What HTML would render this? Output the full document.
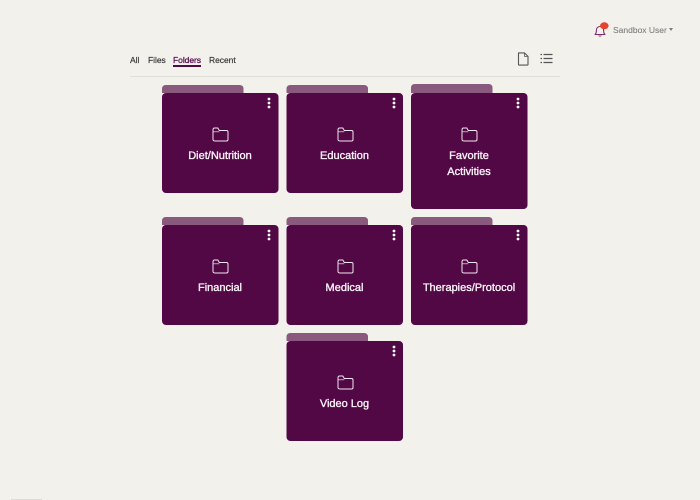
<!DOCTYPE html>
<html>
<head>
<meta charset="utf-8">
<style>
html,body{margin:0;padding:0;width:700px;height:500px;overflow:hidden;background:#f3f1ec;font-family:"Liberation Sans",sans-serif}
.a{position:absolute}
.card{position:absolute;width:116px;color:#fff}
.card .t{position:absolute;left:0;right:0;top:55px;text-align:center;font-size:11px;line-height:16px;color:#f8f2f6;-webkit-text-stroke:.35px #f8f2f6}
.card svg{position:absolute}
.nav{position:absolute;top:54px;font-size:8.5px;line-height:12px;color:#3a3a3a;-webkit-text-stroke:.2px #3a3a3a;letter-spacing:-.05px}
</style>
</head>
<body>
<svg class="a" style="left:0;top:0" width="700" height="500">
<g fill="#8a5a7e">
<path d="M162 93V89q0-4 4-4h73.500q4 0 4 4v4z"/>
<path d="M286.500 93V89q0-4 4-4H364q4 0 4 4v4z"/>
<path d="M411 93V88q0-4 4-4h73.500q4 0 4 4v5z"/>
<path d="M162 225V221q0-4 4-4h73.500q4 0 4 4v4z"/>
<path d="M286.500 225V221q0-4 4-4H364q4 0 4 4v4z"/>
<path d="M411 225V221q0-4 4-4h73.500q4 0 4 4v4z"/>
<path d="M286.500 341V337q0-4 4-4H364q4 0 4 4v4z"/>
</g>
<g fill="#530846">
<rect x="162" y="93" width="116.500" height="100" rx="4"/>
<rect x="286.500" y="93" width="116.500" height="100" rx="4"/>
<rect x="411" y="93" width="116.500" height="116" rx="4"/>
<rect x="162" y="225" width="116.500" height="100" rx="4"/>
<rect x="286.500" y="225" width="116.500" height="100" rx="4"/>
<rect x="411" y="225" width="116.500" height="100" rx="4"/>
<rect x="286.500" y="341" width="116.500" height="100" rx="4"/>
</g>
</svg>

<svg class="a" style="left:592px;top:20px" width="20" height="20" viewBox="0 0 20 20" fill="none"><path d="M3 14.500c1.200-1 1.400-2.200 1.400-4 0-2.400 1.300-4 3.600-4s3.600 1.600 3.600 4c0 1.800.3 3 1.400 4z" stroke="#7d2c6c" stroke-width="1.100" stroke-linejoin="round"/><path d="M6.800 15.500c.3.800 2.100.8 2.400 0" stroke="#7d2c6c"/><ellipse cx="12.300" cy="5.800" rx="4.300" ry="3.500" fill="#e8432f"/></svg>
<div class="a" style="left:613px;top:24px;font-size:8.5px;line-height:12px;color:#7e7e7e;-webkit-text-stroke:.1px #7e7e7e">Sandbox User</div>
<div class="a" style="left:669px;top:28px;width:0;height:0;border-left:2.800px solid transparent;border-right:2.800px solid transparent;border-top:3.200px solid #7e7e7e"></div>

<div class="nav" style="left:130px">All</div>
<div class="nav" style="left:148px">Files</div>
<div class="nav" style="left:173px;color:#5f1153;-webkit-text-stroke:.3px #5f1153">Folders</div>
<div class="nav" style="left:209px">Recent</div>
<div class="a" style="left:173px;top:65px;width:27.500px;height:2px;background:#530846"></div>
<div class="a" style="left:130px;top:76px;width:430px;height:1px;background:#e0dfda"></div>

<svg class="a" style="left:516px;top:52px" width="14" height="14" viewBox="0 0 14 14" fill="none"><path d="M2.500 .9h6L12 4.400V12.500q0 .6-.6.6H3.100q-.6 0-.6-.6z" stroke="#555" stroke-width="1.100" stroke-linejoin="round"/><path d="M8.500 .9v3.500H12" stroke="#555" stroke-width=".8"/></svg>
<svg class="a" style="left:540px;top:53px" width="13" height="11" viewBox="0 0 13 11" fill="none"><path d="M3.500 1.500h9M3.500 5.500h9M3.500 9.500h9" stroke="#555" stroke-width="1.200"/><path d="M.5 1.500h1.500M.5 5.500h1.500M.5 9.500h1.500" stroke="#555" stroke-width="1.300"/></svg>

<div class="card" style="left:162px;top:93px;height:100px"><svg style="left:50px;top:34px" width="17" height="16" viewBox="0 0 17 16" fill="none"><path d="M1 3c0-1 .5-2 1.500-2h3.300l1.500 2.500h7.200c1 0 1.500.5 1.500 1.500v7.500c0 1-.5 1.500-1.500 1.500h-11C1.500 14 1 13.500 1 12.500z" stroke="#f0e6ee" stroke-width="1"/><path d="M1 4.800h6.300" stroke="#f0e6ee" stroke-width=".7"/></svg><svg style="left:104px;top:4px" width="6" height="12" viewBox="0 0 6 12"><circle cx="3" cy="2" r="1.400" fill="#fff"/><circle cx="3" cy="6" r="1.400" fill="#fff"/><circle cx="3" cy="10" r="1.400" fill="#fff"/></svg><div class="t">Diet/Nutrition</div></div>

<div class="card" style="left:286.500px;top:93px;height:100px"><svg style="left:50px;top:34px" width="17" height="16" viewBox="0 0 17 16" fill="none"><path d="M1 3c0-1 .5-2 1.500-2h3.300l1.500 2.500h7.200c1 0 1.500.5 1.500 1.500v7.500c0 1-.5 1.500-1.500 1.500h-11C1.500 14 1 13.500 1 12.500z" stroke="#f0e6ee" stroke-width="1"/><path d="M1 4.800h6.300" stroke="#f0e6ee" stroke-width=".7"/></svg><svg style="left:104px;top:4px" width="6" height="12" viewBox="0 0 6 12"><circle cx="3" cy="2" r="1.400" fill="#fff"/><circle cx="3" cy="6" r="1.400" fill="#fff"/><circle cx="3" cy="10" r="1.400" fill="#fff"/></svg><div class="t">Education</div></div>

<div class="card" style="left:411px;top:93px;height:116px"><svg style="left:50px;top:34px" width="17" height="16" viewBox="0 0 17 16" fill="none"><path d="M1 3c0-1 .5-2 1.500-2h3.300l1.500 2.500h7.200c1 0 1.500.5 1.500 1.500v7.500c0 1-.5 1.500-1.500 1.500h-11C1.500 14 1 13.500 1 12.500z" stroke="#f0e6ee" stroke-width="1"/><path d="M1 4.800h6.300" stroke="#f0e6ee" stroke-width=".7"/></svg><svg style="left:104px;top:4px" width="6" height="12" viewBox="0 0 6 12"><circle cx="3" cy="2" r="1.400" fill="#fff"/><circle cx="3" cy="6" r="1.400" fill="#fff"/><circle cx="3" cy="10" r="1.400" fill="#fff"/></svg><div class="t">Favorite<br>Activities</div></div>

<div class="card" style="left:162px;top:225px;height:100px"><svg style="left:50px;top:34px" width="17" height="16" viewBox="0 0 17 16" fill="none"><path d="M1 3c0-1 .5-2 1.500-2h3.300l1.500 2.500h7.200c1 0 1.500.5 1.500 1.500v7.500c0 1-.5 1.500-1.500 1.500h-11C1.500 14 1 13.500 1 12.500z" stroke="#f0e6ee" stroke-width="1"/><path d="M1 4.800h6.300" stroke="#f0e6ee" stroke-width=".7"/></svg><svg style="left:104px;top:4px" width="6" height="12" viewBox="0 0 6 12"><circle cx="3" cy="2" r="1.400" fill="#fff"/><circle cx="3" cy="6" r="1.400" fill="#fff"/><circle cx="3" cy="10" r="1.400" fill="#fff"/></svg><div class="t">Financial</div></div>

<div class="card" style="left:286.500px;top:225px;height:100px"><svg style="left:50px;top:34px" width="17" height="16" viewBox="0 0 17 16" fill="none"><path d="M1 3c0-1 .5-2 1.500-2h3.300l1.500 2.500h7.200c1 0 1.500.5 1.500 1.500v7.500c0 1-.5 1.500-1.500 1.500h-11C1.500 14 1 13.500 1 12.500z" stroke="#f0e6ee" stroke-width="1"/><path d="M1 4.800h6.300" stroke="#f0e6ee" stroke-width=".7"/></svg><svg style="left:104px;top:4px" width="6" height="12" viewBox="0 0 6 12"><circle cx="3" cy="2" r="1.400" fill="#fff"/><circle cx="3" cy="6" r="1.400" fill="#fff"/><circle cx="3" cy="10" r="1.400" fill="#fff"/></svg><div class="t">Medical</div></div>

<div class="card" style="left:411px;top:225px;height:100px"><svg style="left:50px;top:34px" width="17" height="16" viewBox="0 0 17 16" fill="none"><path d="M1 3c0-1 .5-2 1.500-2h3.300l1.500 2.500h7.200c1 0 1.500.5 1.500 1.500v7.500c0 1-.5 1.500-1.500 1.500h-11C1.500 14 1 13.500 1 12.500z" stroke="#f0e6ee" stroke-width="1"/><path d="M1 4.800h6.300" stroke="#f0e6ee" stroke-width=".7"/></svg><svg style="left:104px;top:4px" width="6" height="12" viewBox="0 0 6 12"><circle cx="3" cy="2" r="1.400" fill="#fff"/><circle cx="3" cy="6" r="1.400" fill="#fff"/><circle cx="3" cy="10" r="1.400" fill="#fff"/></svg><div class="t">Therapies/Protocol</div></div>

<div class="card" style="left:286.500px;top:341px;height:100px"><svg style="left:50px;top:34px" width="17" height="16" viewBox="0 0 17 16" fill="none"><path d="M1 3c0-1 .5-2 1.500-2h3.300l1.500 2.500h7.200c1 0 1.500.5 1.500 1.500v7.500c0 1-.5 1.500-1.500 1.500h-11C1.500 14 1 13.500 1 12.500z" stroke="#f0e6ee" stroke-width="1"/><path d="M1 4.800h6.300" stroke="#f0e6ee" stroke-width=".7"/></svg><svg style="left:104px;top:4px" width="6" height="12" viewBox="0 0 6 12"><circle cx="3" cy="2" r="1.400" fill="#fff"/><circle cx="3" cy="6" r="1.400" fill="#fff"/><circle cx="3" cy="10" r="1.400" fill="#fff"/></svg><div class="t">Video Log</div></div>

<div class="a" style="left:11px;top:499px;width:31px;height:1px;background:#dcdbd6"></div>
</body>
</html>
